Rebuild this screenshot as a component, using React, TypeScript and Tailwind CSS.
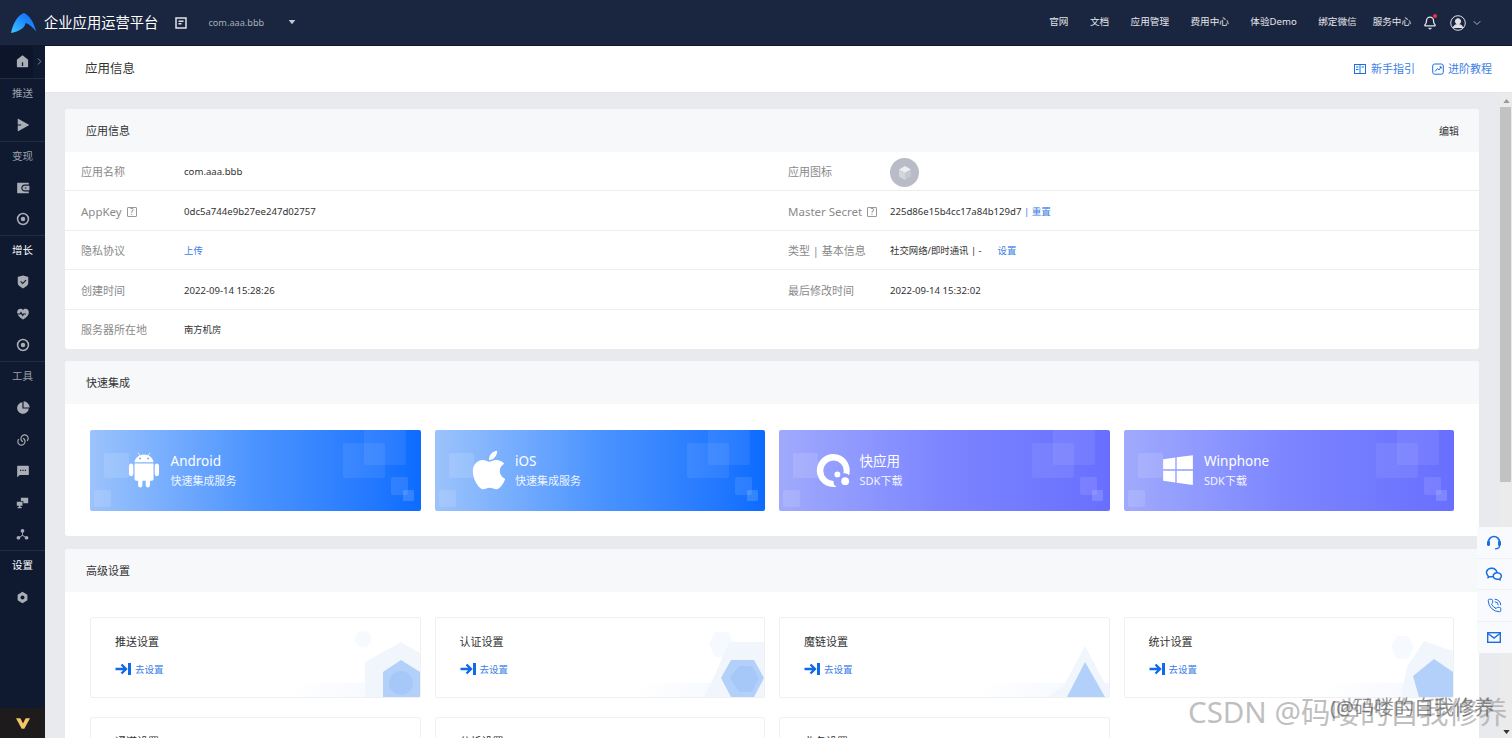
import React from "react";
import {
  RiHome5Fill, RiSendPlane2Fill, RiWallet3Fill, RiShieldCheckFill, RiHeartPulseFill,
  RiPieChart2Fill, RiLinksLine, RiMessage2Fill, RiWechatLine,
} from "react-icons/ri";
import { AiFillAndroid } from "react-icons/ai";
import { FaApple, FaWindows } from "react-icons/fa";
import { PhoneCall, ChevronDown, ChevronRight, Bell } from "lucide-react";

const Ring = () => (
  <svg viewBox="0 0 16 16" className="w-[14px] h-[14px]">
    <circle cx="8" cy="8" r="6.2" fill="none" stroke="#a9adb5" strokeWidth="1.8" />
    <circle cx="8" cy="8" r="2.6" fill="#a9adb5" />
  </svg>
);
const Monitors = () => (
  <svg viewBox="0 0 16 16" className="w-[13px] h-[13px]" fill="#a9adb5">
    <path d="M6 2h9v7H9V6H6z" />
    <path d="M1 7h7v5H5.5v1.5H7V15H2v-1.5h1.5V12H1z" />
  </svg>
);
const Nodes = () => (
  <svg viewBox="0 0 16 16" className="w-[13px] h-[13px]" fill="#a9adb5">
    <circle cx="8" cy="3.5" r="2.3" />
    <circle cx="3" cy="12" r="2.3" />
    <circle cx="13" cy="12" r="2.3" />
    <path d="M7.5 5h1v3.5l4 3-.5.8L8 9.5l-4 2.8-.5-.8 4-3z" />
  </svg>
);
const Hex = () => (
  <svg viewBox="0 0 16 16" className="w-[13px] h-[13px]">
    <path d="M8 1l6 3.5v7L8 15l-6-3.5v-7z" fill="#a9adb5" />
    <circle cx="8" cy="8" r="2.4" fill="#0f1a30" />
  </svg>
);

type SideItem = { label?: string; active?: boolean; line?: boolean; icon?: React.ReactNode };
const ic = "w-[14px] h-[14px] text-[#a9adb5]";
const sideItems: SideItem[] = [
  { label: "推送", line: true },
  { icon: <RiSendPlane2Fill className={ic} /> },
  { label: "变现", line: true },
  { icon: <RiWallet3Fill className={ic} /> },
  { icon: <Ring /> },
  { label: "增长", active: true, line: true },
  { icon: <RiShieldCheckFill className={ic} /> },
  { icon: <RiHeartPulseFill className={ic} /> },
  { icon: <Ring /> },
  { label: "工具", line: true },
  { icon: <RiPieChart2Fill className={ic} /> },
  { icon: <RiLinksLine className={ic} /> },
  { icon: <RiMessage2Fill className={ic} /> },
  { icon: <Monitors /> },
  { icon: <Nodes /> },
  { label: "设置", active: true, line: true },
  { icon: <Hex /> },
];

const navItems = ["官网", "文档", "应用管理", "费用中心", "体验Demo", "绑定微信"];

function Sidebar() {
  return (
    <aside className="w-[45px] shrink-0 bg-[#0f1a30] flex flex-col">
      <div className="h-[31.5px] shrink-0 flex items-center">
        <div className="w-[33px] h-full bg-[#0c152a] flex items-center justify-center">
          <RiHome5Fill className="w-[15px] h-[15px] text-[#a9adb5] ml-[12px]" />
        </div>
        <ChevronRight className="w-[11px] h-[11px] text-[#8c93a1] ml-[1px]" strokeWidth={2} />
      </div>
      {sideItems.map((it, i) => (
        <div
          key={i}
          className={`h-[31.5px] shrink-0 flex items-center justify-center ${it.line ? "border-t border-[#222d43]" : ""}`}
        >
          {it.label ? (
            <span className={`text-[10.5px] ${it.active ? "text-white" : "text-[#9aa0ab]"}`}>{it.label}</span>
          ) : (
            it.icon
          )}
        </div>
      ))}
      <div className="flex-1" />
      <div className="h-[30px] shrink-0 bg-[#1e1b1d] flex items-center justify-center">
        <svg viewBox="0 0 16 12" className="w-[14px] h-[11px]">
          <path d="M0 0h5l3 6 3-6h5L9.500 12h-3z" fill="#f5c469" />
        </svg>
      </div>
    </aside>
  );
}

function Header() {
  return (
    <header className="h-[46px] shrink-0 bg-[#1a2540] flex items-center border-b border-[#10182b]">
      <svg viewBox="0 0 25 20" className="w-[25px] h-[20px] ml-[11px]">
        <defs>
          <linearGradient id="lg" x1="0" y1="1" x2="1" y2="0">
            <stop offset="0" stopColor="#3fc8ff" />
            <stop offset="0.6" stopColor="#1a86ff" />
            <stop offset="1" stopColor="#1268f0" />
          </linearGradient>
        </defs>
        <path d="M0 20C2 10 7 2 13 0c5 2 10 9 12 18.500-3-4.500-7-7.500-10.500-8.500C14 14 10 18 0 20z" fill="url(#lg)" />
      </svg>
      <span className="ml-[8px] text-[14.3px] text-white">企业应用运营平台</span>
      <svg viewBox="0 0 12 12" className="w-[12px] h-[12px] ml-[17px]" fill="none" stroke="#e0e2e7" strokeWidth="1.5">
        <rect x="1" y="1" width="10" height="10" />
        <path d="M3.500 4.200h5M3.500 6.800h3" />
      </svg>
      <span className="ml-[21px] text-[9.2px] text-[#a8aebb]">com.aaa.bbb</span>
      <svg viewBox="0 0 8 6" className="w-[8px] h-[5px] ml-[24px]">
        <path d="M0 0h8L4 5z" fill="#c3c7cf" />
      </svg>
      <div className="flex-1" />
      <nav className="flex items-center text-[9.6px] text-[#e4e6ea]">
        <div className="flex items-center gap-[21.5px]">
          {navItems.map((n) => (
            <span key={n}>{n}</span>
          ))}
        </div>
        <span className="ml-[16px]">服务中心</span>
      </nav>
      <div className="relative ml-[12px]">
        <Bell className="w-[14px] h-[14px] text-[#e4e6ea]" strokeWidth={2.2} />
        <span className="absolute top-[-2px] right-[0px] w-[4px] h-[4px] rounded-full bg-[#f5323c]" />
      </div>
      <svg viewBox="0 0 16 16" className="w-[16px] h-[16px] ml-[13px]" fill="none" stroke="#dfe1e6" strokeWidth="1">
        <circle cx="8" cy="8" r="7.3" />
        <circle cx="8" cy="6.3" r="2.6" fill="#dfe1e6" />
        <path d="M3 13c1-3 3-3.600 5-3.600s4 .6 5 3.600" fill="#dfe1e6" />
      </svg>
      <ChevronDown className="w-[12px] h-[12px] text-[#dfe1e6] ml-[5px] mr-[29px]" strokeWidth={1.5} />
    </header>
  );
}

function SubHeader() {
  return (
    <div className="h-[47px] shrink-0 bg-white flex items-center pl-[40px] pr-[20px] border-b border-[#e3e5e8]">
      <span className="text-[12.5px] text-[#333]">应用信息</span>
      <div className="flex-1" />
      <svg viewBox="0 0 12 12" className="w-[12px] h-[12px]" fill="none" stroke="#1d6fe0" strokeWidth="1">
        <rect x="0.500" y="1.500" width="11" height="9" />
        <path d="M6 1.500v9M2 4h2.500M2 6.500h2.500M7.500 4H10" />
      </svg>
      <span className="ml-[5px] text-[11px] text-[#3c80e6]">新手指引</span>
      <svg viewBox="0 0 12 12" className="w-[12px] h-[12px] ml-[17px]" fill="none" stroke="#1d6fe0" strokeWidth="1">
        <rect x="0.700" y="1" width="10.600" height="10.200" rx="2" />
        <path d="M3 8.500l2.500-3L7 7l2-3M7.500 3.800H9.200v1.700" />
      </svg>
      <span className="ml-[4px] text-[11px] text-[#3c80e6]">进阶教程</span>
    </div>
  );
}

function Help() {
  return (
    <span className="inline-flex items-center justify-center w-[10px] h-[10px] border border-[#999] rounded-[1px] text-[8px] leading-none text-[#777] ml-[5px]">
      ?
    </span>
  );
}

function InfoRow({
  l1, v1, l2, v2, last,
}: { l1: React.ReactNode; v1: React.ReactNode; l2?: React.ReactNode; v2?: React.ReactNode; last?: boolean }) {
  return (
    <div className={`h-[39.4px] grid grid-cols-2 items-center ${last ? "pt-[1px]" : "pt-[3px] border-b border-[#eceef0]"}`}>
      <div className="flex items-center pl-[16px]">
        <div className="w-[103px] text-[11px] text-[#8a8a8a] flex items-center">{l1}</div>
        <div className="text-[9.6px] text-[#333] flex items-center">{v1}</div>
      </div>
      <div className="flex items-center pl-[16px]">
        <div className="w-[102px] text-[11px] text-[#8a8a8a] flex items-center">{l2}</div>
        <div className="text-[9.6px] text-[#333] flex items-center">{v2}</div>
      </div>
    </div>
  );
}

function SectionHead({ title, right }: { title: string; right?: string }) {
  return (
    <div className="h-[43px] pt-[1px] bg-[#f7f8fa] flex items-center justify-between pl-[21px] pr-[20px] text-[11px] text-[#333]">
      <span>{title}</span>
      {right && <span className="text-[10px]">{right}</span>}
    </div>
  );
}

function BannerDeco() {
  return (
    <>
      <div className="absolute left-[14px] top-[23px] w-[25px] h-[25px] rounded-[2px] bg-white/[0.12]" />
      <div className="absolute left-[4px] top-[60px] w-[17px] h-[17px] rounded-[2px] bg-white/[0.12]" />
      <div className="absolute right-[15px] top-[0px] w-[42px] h-[35px] rounded-[2px] bg-white/[0.07]" />
      <div className="absolute right-[36px] top-[13px] w-[42px] h-[35px] rounded-[2px] bg-white/[0.07]" />
      <div className="absolute right-[13px] top-[47px] w-[17px] h-[18px] rounded-[2px] bg-white/[0.1]" />
      <div className="absolute right-[7px] top-[60px] w-[11px] h-[11px] rounded-[1px] bg-white/[0.15]" />
    </>
  );
}

function QuickApp() {
  return (
    <svg viewBox="0 0 36 36" className="w-[35px] h-[35px]">
      <path
        d="M18 1a17 17 0 1 0 3 33.700 6 6 0 0 1-3-5.200c0-.2 0-.5.1-.7H18a10.500 10.500 0 1 1 10.500-10.500c0 1 -.1 1.800-.4 2.600a6 6 0 0 1 5.900 1.900A17 17 0 0 0 18 1z"
        fill="#fff"
      />
      <circle cx="22" cy="22" r="3" fill="#fff" />
      <circle cx="30" cy="29" r="4" fill="#fff" />
    </svg>
  );
}

function Banner({
  icon, title, sub, purple,
}: { icon: React.ReactNode; title: string; sub: string; purple?: boolean }) {
  return (
    <div
      className={`relative h-[81px] rounded-[2px] overflow-hidden flex items-center text-white bg-linear-to-r ${
        purple ? "from-[#a0aafc] via-[#7c84ff] to-[#686fff]" : "from-[#9cc3fb] via-[#4a93ff] to-[#0a6cff]"
      }`}
    >
      <BannerDeco />
      <div className="relative w-[80px] h-[44px] shrink-0 flex items-center justify-center pl-[28px]">{icon}</div>
      <div className="relative flex flex-col ml-[0.5px]">
        <span className="text-[13.5px] leading-[18px]">{title}</span>
        <span className="text-[11px] leading-[16px] mt-[3px] opacity-90">{sub}</span>
      </div>
    </div>
  );
}

function Deco({ kind }: { kind: number }) {
  const dark = "#b2d0f9";
  const inner = "#a6c8f8";
  const mid = "#f1f6fd";
  const light = "#f6f9fe";
  return (
    <svg viewBox="0 0 130 80" className="absolute right-0 bottom-0 w-[130px] h-[80px]">
      <defs>
        <linearGradient id={`fade${kind}`} x1="0" y1="0" x2="1" y2="0">
          <stop offset="0" stopColor="#f1f6fe" stopOpacity="0" />
          <stop offset="1" stopColor="#f1f6fe" />
        </linearGradient>
      </defs>
      <rect x="0" y="66" width="130" height="14" fill={`url(#fade${kind})`} />
      {kind === 1 && (
        <>
          <circle cx="73" cy="22" r="8" fill={light} />
          <path d="M111 25l19 11v44H75V45z" fill={mid} />
          <path d="M111 43l19 12v25H93V55z" fill={dark} />
          <circle cx="111" cy="66" r="12" fill={inner} />
        </>
      )}
      {kind === 2 && (
        <>
          <path d="M75 27l6-12h13l6 12-6 13H81z" fill={light} />
          <path d="M95 25h35v55H70l10-20z" fill={mid} />
          <path d="M87 61l10-18h23l10 18-10 19H97z" fill={dark} />
          <path d="M96 61l9-12h13l7 12-7 14h-13z" fill={inner} />
        </>
      )}
      {kind === 3 && (
        <>
          <path d="M106 29l24 45v6H68l16-10z" fill={mid} />
          <path d="M106 45l20 35H88z" fill={dark} />
        </>
      )}
      {kind === 4 && (
        <>
          <path d="M68 30l6-11h11l6 11-6 12H74z" fill={light} />
          <path d="M101 24l29 10v46H78l6-30z" fill={mid} />
          <path d="M111 42l19 13v25H96l-6-21z" fill={dark} />
        </>
      )}
    </svg>
  );
}

function GoIcon() {
  return (
    <svg viewBox="0 0 16 12" className="w-[16px] h-[12px]">
      <path d="M0.500 6h9.500M6.500 1.500L11 6l-4.500 4.500" fill="none" stroke="#0f6be8" strokeWidth="2.400" />
      <rect x="13" y="0" width="3" height="12" fill="#0f6be8" />
    </svg>
  );
}

function SetCard({ title, kind }: { title: string; kind: number }) {
  return (
    <div className="relative h-[81px] rounded-[2px] border border-[#eef0f2] bg-white overflow-hidden pl-[24px] pt-[16px]">
      {kind > 0 && <Deco kind={kind} />}
      <div className="relative text-[11px] leading-[16px] text-[#333]">{title}</div>
      <div className="relative flex items-center mt-[12px]">
        <GoIcon />
        <span className="ml-[4px] mt-[2px] text-[9.5px] leading-[12px] text-[#3c80e6]">去设置</span>
      </div>
    </div>
  );
}

function Content() {
  return (
    <div className="flex-1 min-w-0 overflow-hidden pl-[20px] pr-[21px] pt-[16px] flex flex-col gap-[12px]">
      <section className="shrink-0 bg-white rounded-[3px] overflow-hidden">
        <SectionHead title="应用信息" right="编辑" />
        <InfoRow
          l1="应用名称"
          v1="com.aaa.bbb"
          l2="应用图标"
          v2={
            <span className="w-[29px] h-[29px] rounded-full bg-[#b9bcc6] flex items-center justify-center">
              <svg viewBox="0 0 16 16" className="w-[16px] h-[16px]">
                <path d="M8 1l6 3.500-6 3.500-6-3.500z" fill="#eceef2" />
                <path d="M2 4.500l6 3.500v7l-6-3.500z" fill="#d3d6dd" />
                <path d="M14 4.500L8 8v7l6-3.500z" fill="#c6c9d2" />
              </svg>
            </span>
          }
        />
        <InfoRow
          l1={<><span className="text-[11.5px]">AppKey</span><Help /></>}
          v1="0dc5a744e9b27ee247d02757"
          l2={<><span className="text-[11.5px]">Master Secret</span><Help /></>}
          v2={<>225d86e15b4cc17a84b129d7&nbsp;<span className="text-[#3c80e6]">|&nbsp;重置</span></>}
        />
        <InfoRow
          l1="隐私协议"
          v1={<span className="text-[9.4px] text-[#3c80e6]">上传</span>}
          l2="类型 | 基本信息"
          v2={<span className="text-[9.4px]">社交网络/即时通讯 | -<span className="ml-[16px] text-[#3c80e6]">设置</span></span>}
        />
        <InfoRow l1="创建时间" v1="2022-09-14 15:28:26" l2="最后修改时间" v2="2022-09-14 15:32:02" />
        <InfoRow l1="服务器所在地" v1={<span className="text-[9.3px]">南方机房</span>} last />
      </section>
      <section className="shrink-0 h-[175px] bg-white rounded-[3px] overflow-hidden">
        <SectionHead title="快速集成" />
        <div className="grid grid-cols-4 gap-[14px] px-[25px] pt-[26px]">
          <Banner icon={<AiFillAndroid className="w-[40px] h-[40px]" />} title="Android" sub="快速集成服务" />
          <Banner icon={<FaApple className="w-[44px] h-[44px]" />} title="iOS" sub="快速集成服务" />
          <Banner icon={<QuickApp />} title="快应用" sub="SDK下载" purple />
          <Banner icon={<FaWindows className="w-[34px] h-[34px]" />} title="Winphone" sub="SDK下载" purple />
        </div>
      </section>
      <section className="shrink-0 mt-[1px] bg-white rounded-[3px] overflow-hidden">
        <SectionHead title="高级设置" />
        <div className="grid grid-cols-4 gap-x-[14px] gap-y-[19px] px-[25px] pt-[25px]">
          <SetCard title="推送设置" kind={1} />
          <SetCard title="认证设置" kind={2} />
          <SetCard title="魔链设置" kind={3} />
          <SetCard title="统计设置" kind={4} />
          <SetCard title="通道设置" kind={0} />
          <SetCard title="分析设置" kind={0} />
          <SetCard title="业务设置" kind={0} />
        </div>
      </section>
    </div>
  );
}

function Scrollbar() {
  return (
    <div className="w-[12px] shrink-0 bg-[#ebebeb] flex flex-col items-center">
      <svg viewBox="0 0 8 5" className="w-[7px] h-[4px] mt-[6px] mb-[4px]"><path d="M0 5h8L4 0z" fill="#9a9a9a" /></svg>
      <div className="w-[11px] h-[375px] bg-[#c2c2c2] mr-[1px]" />
      <div className="flex-1" />
      <svg viewBox="0 0 8 5" className="w-[7px] h-[4px] mb-[4px]"><path d="M0 0h8L4 5z" fill="#333" /></svg>
    </div>
  );
}

function HeadsetIcon() {
  return (
    <svg viewBox="0 0 16 16" className="w-[16px] h-[16px]">
      <path d="M2.500 8a5.500 5.500 0 0 1 11 0" fill="none" stroke="#1a6fe0" strokeWidth="1.700" />
      <rect x="1" y="7" width="3" height="5" rx="1.300" fill="#1a6fe0" />
      <rect x="12" y="7" width="3" height="5" rx="1.300" fill="#1a6fe0" />
      <path d="M13.500 12c0 1.800-2 2.800-4.500 2.800" fill="none" stroke="#1a6fe0" strokeWidth="1.300" />
    </svg>
  );
}

function MailIcon() {
  return (
    <svg viewBox="0 0 14 11" className="w-[14px] h-[11px]" fill="none" stroke="#1a6fe0" strokeWidth="1.400">
      <rect x="0.700" y="0.700" width="12.600" height="9.600" />
      <path d="M1 1.500l6 4.500 6-4.500" />
    </svg>
  );
}

function FloatPanel() {
  const items = [
    <HeadsetIcon />,
    <RiWechatLine className="w-[18px] h-[18px] text-[#1a6fe0]" />,
    <PhoneCall className="w-[15px] h-[15px] text-[#1a6fe0]" strokeWidth={1.6} />,
    <MailIcon />,
  ];
  return (
    <div className="absolute right-0 top-[527px] w-[35px] bg-[#f8fafd] flex flex-col">
      {items.map((it, i) => (
        <div key={i} className={`h-[31.5px] pr-[1px] flex items-center justify-center ${i < 3 ? "border-b border-[#eef0f3]" : ""}`}>
          {it}
        </div>
      ))}
    </div>
  );
}

export default function App() {
  return (
    <div className="relative w-[1512px] h-[738px] overflow-hidden bg-[#e8eaed] flex flex-col font-['Noto_Sans','Noto_Sans_CJK_SC',sans-serif]">
      <Header />
      <div className="flex-1 min-h-0 flex">
        <Sidebar />
        <main className="flex-1 min-w-0 flex flex-col">
          <SubHeader />
          <div className="flex-1 min-h-0 flex">
            <Content />
            <Scrollbar />
          </div>
        </main>
      </div>
      <FloatPanel />
      <div className="absolute left-[1188px] top-[692px] text-[29.5px] leading-[40px] whitespace-nowrap text-[#aaaaaa]/75">
        CSDN @码喽的自我修养
      </div>
      <div className="absolute left-[1330px] top-[694px] text-[20px] leading-[28px] whitespace-nowrap text-[#444]/60">
        (@码喽的自我修养
      </div>
    </div>
  );
}
